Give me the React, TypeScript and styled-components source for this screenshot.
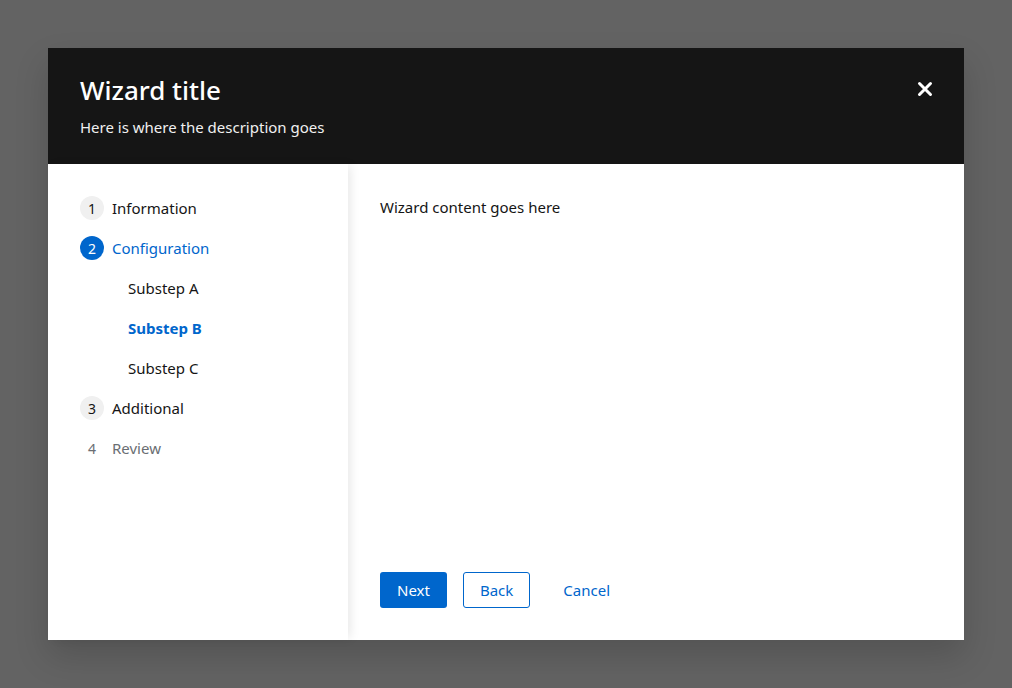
import React from "react";
import styled, { createGlobalStyle } from "styled-components";

const GlobalStyle = createGlobalStyle`
  html, body {
    margin: 0;
    padding: 0;
    height: 100%;
  }
  body {
    font-family: "Noto Sans", "Open Sans", sans-serif;
    color: #151515;
  }
  #root {
    height: 100%;
  }
`;

type Step = {
  id: number;
  label: string;
  state?: "current" | "disabled";
  substeps?: { label: string; current?: boolean }[];
};

const steps: Step[] = [
  { id: 1, label: "Information" },
  {
    id: 2,
    label: "Configuration",
    state: "current",
    substeps: [
      { label: "Substep A" },
      { label: "Substep B", current: true },
      { label: "Substep C" },
    ],
  },
  { id: 3, label: "Additional" },
  { id: 4, label: "Review", state: "disabled" },
];

const Backdrop = styled.div`
  height: 688px;
  background: #636363;
  display: flex;
  justify-content: center;
  padding-top: 48px;
  box-sizing: border-box;
`;

const Modal = styled.div`
  width: 916px;
  height: 592px;
  background: #fff;
  display: flex;
  flex-direction: column;
  box-shadow: 0 16px 32px rgba(3, 3, 3, 0.16);
`;

const Header = styled.header`
  background: #151515;
  color: #fff;
  height: 116px;
  box-sizing: border-box;
  padding: 26px 32px 0 32px;
  display: flex;
  justify-content: space-between;
  align-items: flex-start;
`;

const Title = styled.h1`
  margin: 0;
  font-size: 26px;
  font-weight: 500;
  line-height: 32px;
`;

const Description = styled.p`
  margin: 10px 0 0;
  font-size: 15px;
  line-height: 22px;
  color: #f0f0f0;
`;

const CloseButton = styled.button`
  background: none;
  border: none;
  padding: 0;
  margin: 3px -5px 0 0;
  width: 24px;
  height: 24px;
  display: flex;
  align-items: center;
  justify-content: center;
  cursor: pointer;
`;

const Body = styled.div`
  flex: 1;
  display: flex;
  min-height: 0;
`;

const Nav = styled.nav`
  width: 300px;
  flex-shrink: 0;
  padding: 24px 32px;
  box-sizing: border-box;
  box-shadow: 4px 0 10px -2px rgba(3, 3, 3, 0.1);
  position: relative;
  z-index: 1;
`;

const NavList = styled.ol`
  list-style: none;
  margin: 0;
  padding: 0;
  display: flex;
  flex-direction: column;
`;

const NavItem = styled.li<{ $state?: string }>`
  display: flex;
  align-items: center;
  height: 40px;
  gap: 8px;
  font-size: 15px;
  color: ${(p) =>
    p.$state === "current" ? "#0066cc" : p.$state === "disabled" ? "#6a6e73" : "#151515"};
`;

const StepNumber = styled.span<{ $state?: string }>`
  width: 24px;
  height: 24px;
  border-radius: 50%;
  display: flex;
  align-items: center;
  justify-content: center;
  font-size: 14px;
  flex-shrink: 0;
  background: ${(p) =>
    p.$state === "current" ? "#0066cc" : p.$state === "disabled" ? "transparent" : "#f0f0f0"};
  color: ${(p) =>
    p.$state === "current" ? "#fff" : p.$state === "disabled" ? "#6a6e73" : "#151515"};
`;

const SubItem = styled.li<{ $current?: boolean }>`
  display: flex;
  align-items: center;
  height: 40px;
  padding-left: 48px;
  font-size: 15px;
  color: ${(p) => (p.$current ? "#0066cc" : "#151515")};
  font-weight: ${(p) => (p.$current ? 700 : 400)};
`;

const Main = styled.main`
  flex: 1;
  display: flex;
  flex-direction: column;
`;

const Content = styled.div`
  flex: 1;
  padding: 32px 32px;
  font-size: 15px;
  line-height: 22px;
`;

const Footer = styled.footer`
  display: flex;
  align-items: center;
  gap: 16px;
  padding: 0 32px 32px;
`;

const Button = styled.button<{ $variant: "primary" | "secondary" | "link" }>`
  height: 36px;
  padding: 0 16px;
  font-family: inherit;
  font-size: 15px;
  border-radius: 3px;
  cursor: pointer;
  background: ${(p) => (p.$variant === "primary" ? "#0066cc" : "transparent")};
  color: ${(p) => (p.$variant === "primary" ? "#fff" : "#0066cc")};
  border: 1px solid ${(p) => (p.$variant === "secondary" ? "#0066cc" : "transparent")};
`;

export default function App() {
  return (
    <>
      <GlobalStyle />
      <Backdrop>
        <Modal>
          <Header>
            <div>
              <Title>Wizard title</Title>
              <Description>Here is where the description goes</Description>
            </div>
            <CloseButton aria-label="Close">
              <svg width="16" height="16" viewBox="0 0 16 16">
                <path
                  d="M2.5 2.5 L13.5 13.5 M13.5 2.5 L2.5 13.5"
                  stroke="#fff"
                  strokeWidth="3"
                  strokeLinecap="round"
                />
              </svg>
            </CloseButton>
          </Header>
          <Body>
            <Nav>
              <NavList>
                {steps.map((s) => (
                  <React.Fragment key={s.id}>
                    <NavItem $state={s.state}>
                      <StepNumber $state={s.state}>{s.id}</StepNumber>
                      {s.label}
                    </NavItem>
                    {s.substeps?.map((sub) => (
                      <SubItem key={sub.label} $current={sub.current}>
                        {sub.label}
                      </SubItem>
                    ))}
                  </React.Fragment>
                ))}
              </NavList>
            </Nav>
            <Main>
              <Content>Wizard content goes here</Content>
              <Footer>
                <Button $variant="primary">Next</Button>
                <Button $variant="secondary">Back</Button>
                <Button $variant="link">Cancel</Button>
              </Footer>
            </Main>
          </Body>
        </Modal>
      </Backdrop>
    </>
  );
}
